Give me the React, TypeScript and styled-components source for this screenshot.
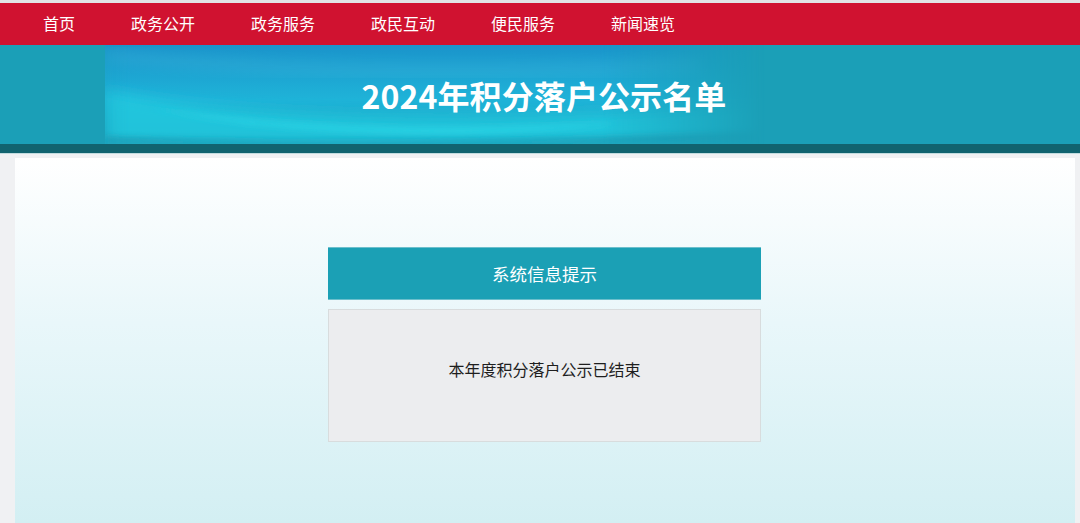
import React from "react";
import styled, { createGlobalStyle } from "styled-components";

const GlobalStyle = createGlobalStyle`
  html, body {
    margin: 0;
    padding: 0;
    background: #f0f1f3;
    font-family: "Noto Sans CJK SC", "Noto Sans", sans-serif;
  }
  * { box-sizing: border-box; }
`;

const Page = styled.div`
  width: 1080px;
  min-height: 523px;
  display: flex;
  flex-direction: column;
  background: #f0f1f3;
`;

const TopStrip = styled.div`
  height: 3px;
  background: #e2e3e5;
`;

const Nav = styled.nav`
  height: 42px;
  background: #d01230;
  display: flex;
  align-items: center;
  padding-left: 43px;
  gap: 56px;
`;

const NavItem = styled.a`
  color: #ffffff;
  font-size: 16px;
  line-height: 22px;
  text-decoration: none;
  white-space: nowrap;
  margin-top: -2px;
`;

const Banner = styled.header`
  position: relative;
  height: 99px;
  background: #1b9fb7;
  display: flex;
  align-items: center;
  justify-content: center;
  overflow: hidden;
`;

const Swoosh = styled.svg`
  position: absolute;
  left: 0;
  top: 0;
`;

const Title = styled.h1`
  position: relative;
  margin: 0 0 0 8px;
  padding-top: 1px;
  color: #ffffff;
  font-size: 32px;
  line-height: 40px;
  font-weight: 700;
  letter-spacing: 0.1px;
`;

const DarkBand = styled.div`
  height: 10px;
  background: #11636f;
  border-bottom: 1px solid #c3dcdf;
`;

const Content = styled.main`
  flex: 1;
  margin: 4px 5px 0 15px;
  background: linear-gradient(180deg, #ffffff 0%, #e9f7fa 45%, #d3eff3 100%);
  display: flex;
  flex-direction: column;
  align-items: center;
  padding-top: 89px;
  min-height: 364px;
`;

const Dialog = styled.section`
  width: 433px;
  margin-left: -1px;
  display: flex;
  flex-direction: column;
  gap: 9px;
`;

const DialogHeader = styled.div`
  height: 53px;
  background: #1ba0b5;
  border-top: 1px solid #6cbfcc;
  border-bottom: 1px solid #6cbfcc;
  color: #ffffff;
  font-size: 17.5px;
  display: flex;
  align-items: center;
  justify-content: center;
`;

const DialogBody = styled.div`
  height: 133px;
  background: #ecedef;
  border: 1px solid #d8dcdd;
  color: #1e1e1e;
  font-size: 16px;
  line-height: 22px;
  text-align: center;
  padding-top: 48px;
`;

const navItems = ["首页", "政务公开", "政务服务", "政民互动", "便民服务", "新闻速览"];

export default function App() {
  return (
    <>
      <GlobalStyle />
      <Page>
        <TopStrip />
        <Nav>
          {navItems.map((n) => (
            <NavItem key={n} href="#">
              {n}
            </NavItem>
          ))}
        </Nav>
        <Banner>
          <Swoosh width="1080" height="99" viewBox="0 0 1080 99">
            <defs>
              <linearGradient id="sky" x1="0" y1="0" x2="0" y2="1">
                <stop offset="0" stopColor="#1a94cb" />
                <stop offset="0.55" stopColor="#1fb3d8" />
                <stop offset="1" stopColor="#1c9db8" />
              </linearGradient>
              <linearGradient id="fadeX" x1="0" y1="0" x2="1" y2="0">
                <stop offset="0" stopColor="#fff" stopOpacity="0.85" />
                <stop offset="0.04" stopColor="#fff" stopOpacity="1" />
                <stop offset="0.75" stopColor="#fff" stopOpacity="1" />
                <stop offset="1" stopColor="#fff" stopOpacity="0" />
              </linearGradient>
              <mask id="m">
                <rect x="105" y="0" width="660" height="99" fill="url(#fadeX)" />
              </mask>
              <filter id="blur" x="-20%" y="-50%" width="140%" height="200%">
                <feGaussianBlur stdDeviation="7" />
              </filter>
              <filter id="blur2" x="-20%" y="-50%" width="140%" height="200%">
                <feGaussianBlur stdDeviation="3" />
              </filter>
            </defs>
            <g mask="url(#m)">
              <rect x="105" y="0" width="660" height="99" fill="url(#sky)" />
              <path
                d="M105 45 C 220 70, 420 80, 760 60 L 760 99 L 105 99 Z"
                fill="#24c9df"
                filter="url(#blur)"
                opacity="0.85"
              />
              <path
                d="M150 62 C 260 82, 420 90, 620 78 C 520 92, 300 96, 150 62 Z"
                fill="#2fdcea"
                filter="url(#blur2)"
                opacity="0.8"
              />
              <path
                d="M105 92 C 300 99, 500 99, 760 86 L 760 99 L 105 99 Z"
                fill="#1b9db5"
                filter="url(#blur2)"
                opacity="0.9"
              />
              <path
                d="M105 10 C 250 25, 450 30, 700 20"
                stroke="#6fd0ea"
                strokeWidth="10"
                fill="none"
                opacity="0.18"
                filter="url(#blur)"
              />
            </g>
          </Swoosh>
          <Title>2024年积分落户公示名单</Title>
        </Banner>
        <DarkBand />
        <Content>
          <Dialog>
            <DialogHeader>系统信息提示</DialogHeader>
            <DialogBody>本年度积分落户公示已结束</DialogBody>
          </Dialog>
        </Content>
      </Page>
    </>
  );
}
